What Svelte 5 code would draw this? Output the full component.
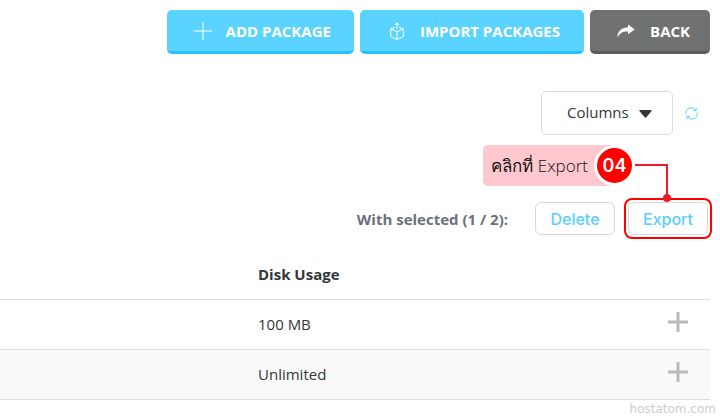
<script>
  const rows = ['100 MB', 'Unlimited'];
</script>

<main>
  <nav class="toolbar" aria-label="Package actions">
    <button class="action add">
      <svg width="18" height="18" viewBox="0 0 18 18" aria-hidden="true"><path d="M9 0v18M0 9h18" /></svg>
      ADD PACKAGE
    </button>
    <button class="action import">
      <svg width="14" height="18" viewBox="0 0 14 18" aria-hidden="true">
        <path d="M4.8 5.2.7 7v7.6L7 17.4l6.3-2.8V7L9.2 5.2M.7 7 7 9.6 13.3 7M7 9.6v7.8M7 7V.8M4.8 3 7 .8 9.2 3" />
      </svg>
      IMPORT PACKAGES
    </button>
    <button class="action back">
      <svg class="solid" width="18" height="14" viewBox="0 0 18 14" aria-hidden="true">
        <path d="M11 .5 17.8 5.5 11 10.3V7.6C6 7.3 2.8 9 .5 13.5 .2 7.8 4.5 3.6 11 3.3Z" />
      </svg>
      BACK
    </button>
  </nav>

  <div class="filters">
    <div class="picker">
      <select aria-label="Columns"><option>Columns</option></select>
      <svg width="13" height="8" viewBox="0 0 13 8" aria-hidden="true"><path d="M1 0h11q1.3.3.4 1.3L7.3 7.3q-.8.8-1.6 0L.6 1.3Q-.3.3 1 0Z" /></svg>
    </div>
    <button class="refresh" aria-label="Refresh">
      <svg width="13" height="13" viewBox="0 0 13 13" aria-hidden="true">
        <path d="M.9 7.5A5.4 5.4 0 0 1 10.5 3M12.1 5.5A5.4 5.4 0 0 1 2.5 10M11.2.7v2.8H8.4M1.8 12.3V9.5h2.8" />
      </svg>
    </button>
  </div>

  <div class="selection">
    <strong>With selected (1 / 2):</strong>
    <button class="small">Delete</button>
    <div class="target">
      <button class="small">Export</button>
      <div class="callout">
        <span class="note">คลิกที่ Export</span><span class="step">04</span>
      </div>
      <svg class="leader" width="38" height="42" viewBox="0 0 38 42" aria-hidden="true">
        <path d="M1 5h32v34" /><circle cx="33" cy="38" r="4" />
      </svg>
    </div>
  </div>

  <table>
    <colgroup><col class="lead" /><col /><col class="more" /></colgroup>
    <thead>
      <tr><td></td><th scope="col">Disk Usage</th><td></td></tr>
    </thead>
    <tbody>
      {#each rows as usage}
        <tr>
          <td></td>
          <td>{usage}</td>
          <td class="end">
            <button class="expand" aria-label="Expand row">
              <svg width="20" height="20" viewBox="0 0 20 20" aria-hidden="true"><path d="M10 0v20M0 10h20" /></svg>
            </button>
          </td>
        </tr>
      {/each}
    </tbody>
  </table>
  <footer>hostatom.com</footer>
</main>

<style>
  :global(body) { margin: 0; background: #fff; }
  main {
    padding: 10px 10px 0 0;
    font: 15px/20px "Open Sans", "Noto Sans", sans-serif;
    color: #33373a;
  }
  button, select { font: inherit; color: inherit; margin: 0; box-sizing: border-box; cursor: pointer; }
  svg { display: block; flex: none; fill: none; stroke: currentColor; }
  .toolbar { display: flex; justify-content: flex-end; gap: 6px; }
  .action {
    display: flex; align-items: center; gap: 14px;
    height: 44px; padding: 3px 23px 3px 27px;
    border: 0; border-bottom: 3px solid #29bfff; border-radius: 5px;
    background: #5bd3ff; color: #fff; font-weight: 700; white-space: nowrap;
  }
  .import { padding: 3px 24px 3px 30px; gap: 16px; }
  .back { padding-right: 20px; gap: 15px; background: #6f7271; border-color: #5b5d5c; }
  .back .solid { fill: #fff; stroke: none; }
  .filters { display: flex; justify-content: flex-end; align-items: center; gap: 12px; padding: 37px 12px 0 0; }
  .picker { position: relative; }
  .picker select {
    display: block; appearance: none; width: 132px; height: 44px; padding: 0 25px 2px;
    border: 1px solid #dcdcdc; border-radius: 5px; background: #fff;
  }
  .picker svg { position: absolute; right: 21px; top: 19px; fill: #33373a; stroke: none; pointer-events: none; }
  .refresh { padding: 0; border: 0; background: none; color: #5bd3ff; }
  .selection { display: flex; justify-content: flex-end; align-items: center; margin: 63px -2px 0 0; }
  .selection strong { margin-right: 27px; color: #6c7079; }
  .small {
    display: block; width: 80px; height: 33px; padding: 0;
    border: 1px solid #d6d9da; border-radius: 6px; background: #fff;
    color: #5bcfff; font: 500 16px/20px Inter, sans-serif;
  }
  .target { position: relative; margin-left: 9px; padding: 2px; border: 2px solid #f00; border-radius: 8px; }
  .callout {
    position: absolute; right: 75px; top: -55px; display: flex; align-items: center;
    height: 41px; white-space: nowrap;
  }
  .note {
    box-sizing: border-box; height: 41px; padding: 0 26px 0 8px; margin-right: -20px;
    border-radius: 5px; background: #ffc8ce; color: #111;
    font: 300 17px/41px "Open Sans", "Noto Sans", sans-serif;
  }
  .step {
    width: 35px; height: 35px; border: 3px solid #fff; border-radius: 50%; background: #f00;
    color: #fff; text-align: center; font: 600 18px/35px Inter, sans-serif;
  }
  .leader { position: absolute; right: 38px; top: -40px; stroke: #ed1c24; stroke-width: 2; }
  .leader circle { fill: #ed1c24; stroke: none; }
  table { width: 100%; margin-top: 10px; border-collapse: collapse; table-layout: fixed; }
  .lead { width: 250px; }
  .more { width: 60px; }
  th, td { box-sizing: border-box; height: 50px; padding: 0 8px; text-align: left; border-bottom: 1px solid #dcdddf; }
  tbody tr:nth-child(even) { background: #f9f9f9; }
  .end { padding-right: 22px; }
  .expand { display: block; margin: 0 0 4px auto; padding: 0; border: 0; background: none; color: #b9babc; }
  .expand svg { stroke-width: 3; }
  footer { margin-right: -6px; text-align: right; color: #ccc; font: 12px/18px "DejaVu Sans", sans-serif; }
</style>
